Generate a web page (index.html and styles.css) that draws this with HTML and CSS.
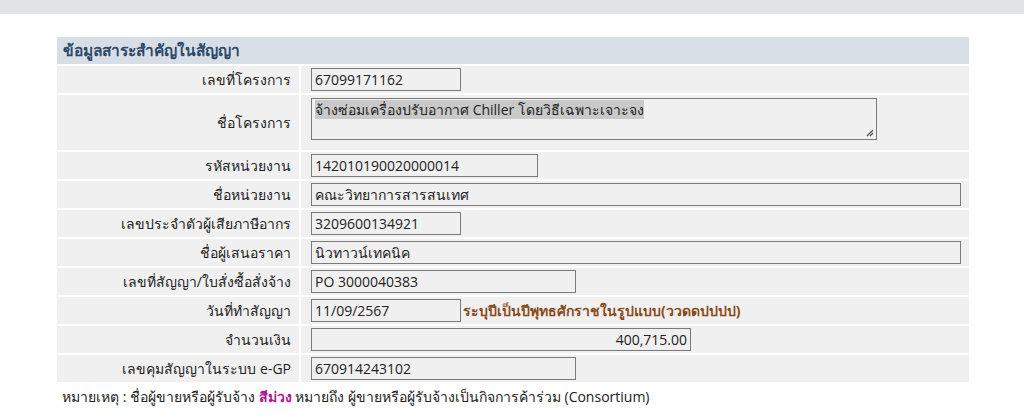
FILE: index.html
```html
<!DOCTYPE html>
<html lang="th">
<head>
<meta charset="utf-8">
<link rel="stylesheet" href="styles.css">
</head>
<body>
<div class="topbar"></div>
<div class="wrap">
  <div class="panel">
    <div class="head">ข้อมูลสาระสำคัญในสัญญา</div>
    <div class="grid">
      <div class="lbl">เลขที่โครงการ</div>
      <div class="val"><span class="box w150">67099171162</span></div>

      <div class="lbl tall">ชื่อโครงการ</div>
      <div class="val tallv"><span class="area"><span class="sel">จ้างซ่อมเครื่องปรับอากาศ Chiller โดยวิธีเฉพาะเจาะจง</span>
        <svg class="grip" width="9" height="9" viewBox="0 0 9 9"><path d="M8 2 L2 8 M8 5 L5 8" stroke="#555" stroke-width="1.3" fill="none"/></svg></span></div>

      <div class="lbl">รหัสหน่วยงาน</div>
      <div class="val"><span class="box w227">142010190020000014</span></div>

      <div class="lbl">ชื่อหน่วยงาน</div>
      <div class="val"><span class="box wfull">คณะวิทยาการสารสนเทศ</span></div>

      <div class="lbl">เลขประจำตัวผู้เสียภาษีอากร</div>
      <div class="val"><span class="box w150">3209600134921</span></div>

      <div class="lbl">ชื่อผู้เสนอราคา</div>
      <div class="val"><span class="box wfull">นิวทาวน์เทคนิค</span></div>

      <div class="lbl">เลขที่สัญญา/ใบสั่งซื้อสั่งจ้าง</div>
      <div class="val"><span class="box w265">PO 3000040383</span></div>

      <div class="lbl">วันที่ทำสัญญา</div>
      <div class="val"><span class="box w150">11/09/2567</span><span class="hint">ระบุปีเป็นปีพุทธศักราชในรูปแบบ(ววดดปปปป)</span></div>

      <div class="lbl">จำนวนเงิน</div>
      <div class="val"><span class="box w380 right">400,715.00</span></div>

      <div class="lbl">เลขคุมสัญญาในระบบ e-GP</div>
      <div class="val"><span class="box w265">670914243102</span></div>
    </div>
  </div>
  <p class="note">หมายเหตุ : ชื่อผู้ขายหรือผู้รับจ้าง <span class="purple">สีม่วง</span> หมายถึง ผู้ขายหรือผู้รับจ้างเป็นกิจการค้าร่วม (Consortium)</p>
</div>
</body>
</html>
```

FILE: styles.css
```css
html, body {
  margin: 0;
  padding: 0;
  background: #ffffff;
}
body {
  font-family: "Open Sans", sans-serif;
  font-size: 14px;
  color: #222;
}
.topbar {
  height: 14px;
  background: #e1e3e6;
}
.wrap {
  padding: 23px 0 0 57px;
  width: 912px;
}
.panel {
  background: #ffffff;
}
.head {
  height: 27px;
  line-height: 27px;
  background: #d8dee5;
  color: #2d4a6b;
  font-weight: bold;
  padding-left: 6px;
  font-size: 15.5px;
}
.grid {
  display: grid;
  grid-template-columns: 242px 1fr;
  gap: 2px;
  margin-top: 2px;
}
.lbl, .val {
  background: #f0f0f0;
  min-height: 27px;
  display: flex;
  align-items: center;
}
.lbl {
  justify-content: flex-end;
  padding-right: 8px;
}
.val {
  padding-left: 10px;
}
.tall, .tallv {
  min-height: 52px;
}
.tallv {
  align-items: flex-start;
  padding-top: 3px;
}
.box {
  box-sizing: border-box;
  height: 23px;
  line-height: 21px;
  border: 1px solid #7a7a7a;
  padding: 0 3px;
  background: #f0f0f0;
  white-space: nowrap;
  display: inline-block;
}
.w150 { width: 150px; }
.w227 { width: 227px; }
.w265 { width: 265px; }
.w380 { width: 380px; }
.wfull { width: 650px; }
.right { text-align: right; }
.area {
  position: relative;
  box-sizing: border-box;
  width: 566px;
  height: 42px;
  border: 1px solid #7a7a7a;
  padding: 1px 3px;
  line-height: 19px;
  display: block;
}
.sel {
  background: #c9c9c9;
}
.grip {
  position: absolute;
  right: 2px;
  bottom: 2px;
}
.hint {
  color: #8a4a1a;
  padding-left: 2px;
  font-weight: bold;
}
.note {
  margin: 4px 0 0 5px;
}
.purple {
  color: #b0178f;
  font-weight: bold;
}
```
